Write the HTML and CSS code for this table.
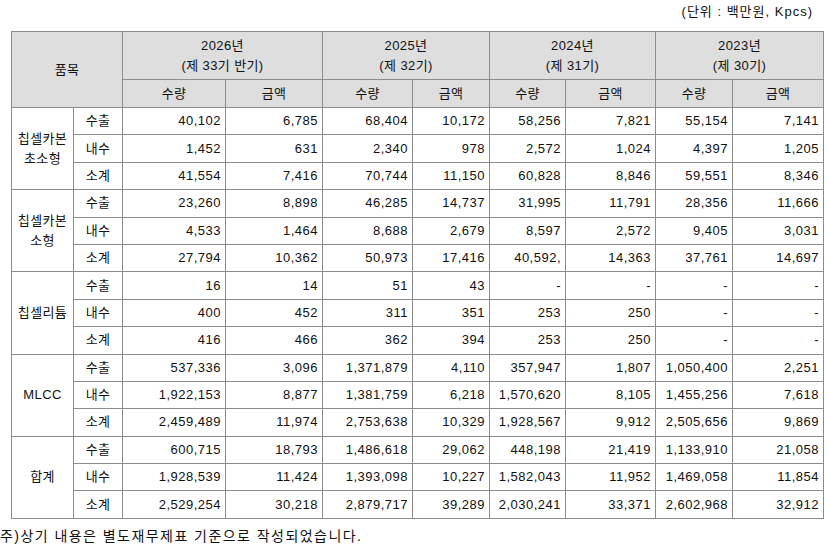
FILE: index.html
```html
<!DOCTYPE html>
<html lang="ko">
<head>
<meta charset="utf-8">
<link rel="stylesheet" href="styles.css">
</head>
<body>
<div class="page">
  <div class="unit">(단위 : 백만원, Kpcs)</div>
  <table class="sales">
    <colgroup>
      <col class="c1"><col class="c2">
      <col class="c3"><col class="c4">
      <col class="c5"><col class="c6">
      <col class="c7"><col class="c8">
      <col class="c9"><col class="c10">
    </colgroup>
    <thead>
      <tr class="h1">
        <th colspan="2" rowspan="2">품목</th>
        <th colspan="2">2026년<br>(제 33기 반기)</th>
        <th colspan="2">2025년<br>(제 32기)</th>
        <th colspan="2">2024년<br>(제 31기)</th>
        <th colspan="2">2023년<br>(제 30기)</th>
      </tr>
      <tr class="h2">
        <th>수량</th><th>금액</th>
        <th>수량</th><th>금액</th>
        <th>수량</th><th>금액</th>
        <th>수량</th><th>금액</th>
      </tr>
    </thead>
    <tbody>
      <tr><td rowspan="3" class="grp">칩셀카본<br>초소형</td><td class="lab">수출</td><td>40,102</td><td>6,785</td><td>68,404</td><td>10,172</td><td>58,256</td><td>7,821</td><td>55,154</td><td>7,141</td></tr>
      <tr><td class="lab">내수</td><td>1,452</td><td>631</td><td>2,340</td><td>978</td><td>2,572</td><td>1,024</td><td>4,397</td><td>1,205</td></tr>
      <tr><td class="lab">소계</td><td>41,554</td><td>7,416</td><td>70,744</td><td>11,150</td><td>60,828</td><td>8,846</td><td>59,551</td><td>8,346</td></tr>

      <tr><td rowspan="3" class="grp">칩셀카본<br>소형</td><td class="lab">수출</td><td>23,260</td><td>8,898</td><td>46,285</td><td>14,737</td><td>31,995</td><td>11,791</td><td>28,356</td><td>11,666</td></tr>
      <tr><td class="lab">내수</td><td>4,533</td><td>1,464</td><td>8,688</td><td>2,679</td><td>8,597</td><td>2,572</td><td>9,405</td><td>3,031</td></tr>
      <tr><td class="lab">소계</td><td>27,794</td><td>10,362</td><td>50,973</td><td>17,416</td><td>40,592,</td><td>14,363</td><td>37,761</td><td>14,697</td></tr>

      <tr><td rowspan="3" class="grp">칩셀리튬</td><td class="lab">수출</td><td>16</td><td>14</td><td>51</td><td>43</td><td>-</td><td>-</td><td>-</td><td>-</td></tr>
      <tr><td class="lab">내수</td><td>400</td><td>452</td><td>311</td><td>351</td><td>253</td><td>250</td><td>-</td><td>-</td></tr>
      <tr><td class="lab">소계</td><td>416</td><td>466</td><td>362</td><td>394</td><td>253</td><td>250</td><td>-</td><td>-</td></tr>

      <tr><td rowspan="3" class="grp">MLCC</td><td class="lab">수출</td><td>537,336</td><td>3,096</td><td>1,371,879</td><td>4,110</td><td>357,947</td><td>1,807</td><td>1,050,400</td><td>2,251</td></tr>
      <tr><td class="lab">내수</td><td>1,922,153</td><td>8,877</td><td>1,381,759</td><td>6,218</td><td>1,570,620</td><td>8,105</td><td>1,455,256</td><td>7,618</td></tr>
      <tr><td class="lab">소계</td><td>2,459,489</td><td>11,974</td><td>2,753,638</td><td>10,329</td><td>1,928,567</td><td>9,912</td><td>2,505,656</td><td>9,869</td></tr>

      <tr><td rowspan="3" class="grp">합계</td><td class="lab">수출</td><td>600,715</td><td>18,793</td><td>1,486,618</td><td>29,062</td><td>448,198</td><td>21,419</td><td>1,133,910</td><td>21,058</td></tr>
      <tr><td class="lab">내수</td><td>1,928,539</td><td>11,424</td><td>1,393,098</td><td>10,227</td><td>1,582,043</td><td>11,952</td><td>1,469,058</td><td>11,854</td></tr>
      <tr><td class="lab">소계</td><td>2,529,254</td><td>30,218</td><td>2,879,717</td><td>39,289</td><td>2,030,241</td><td>33,371</td><td>2,602,968</td><td>32,912</td></tr>
    </tbody>
  </table>
  <div class="note">주)상기 내용은 별도재무제표 기준으로 작성되었습니다.</div>
</div>
</body>
</html>
```

FILE: styles.css
```css
html, body {
  margin: 0;
  padding: 0;
  background: #ffffff;
}
body {
  font-family: "Liberation Sans", "Noto Sans CJK KR", sans-serif;
  font-size: 13px;
  color: #111111;
}
.page {
  width: 827px;
}
.unit {
  height: 31px;
  box-sizing: border-box;
  padding: 4px 14px 0 0;
  text-align: right;
  font-size: 13px;
  line-height: 16px;
  letter-spacing: 1px;
}
.sales {
  margin-left: 11px;
  width: 812px;
  border-collapse: collapse;
  table-layout: fixed;
  border: 1px solid #000;
}
.c1 { width: 62px; }
.c2 { width: 49px; }
.c3 { width: 103px; }
.c4 { width: 97px; }
.c5 { width: 90px; }
.c6 { width: 77px; }
.c7 { width: 76px; }
.c8 { width: 90px; }
.c9 { width: 77px; }
.c10 { width: 91px; }
.sales th,
.sales td {
  border: 1px solid #8c8c8c;
  padding: 0 4px;
  line-height: 20px;
  white-space: nowrap;
}
.sales th {
  background: #dedede;
  font-weight: normal;
  text-align: center;
  letter-spacing: 0.4px;
}
.sales tr.h1 { height: 48px; }
.sales tr.h2 { height: 28px; }
.sales tbody tr { height: 27.4px; }
.sales td {
  text-align: right;
  padding-right: 4px;
  letter-spacing: 0.5px;
}
.sales td.grp,
.sales td.lab {
  text-align: center;
  padding: 0 2px;
  letter-spacing: 0.4px;
}
.note {
  padding: 8px 0 0 0;
  font-size: 14px;
  line-height: 18px;
  letter-spacing: 1.45px;
}
```
